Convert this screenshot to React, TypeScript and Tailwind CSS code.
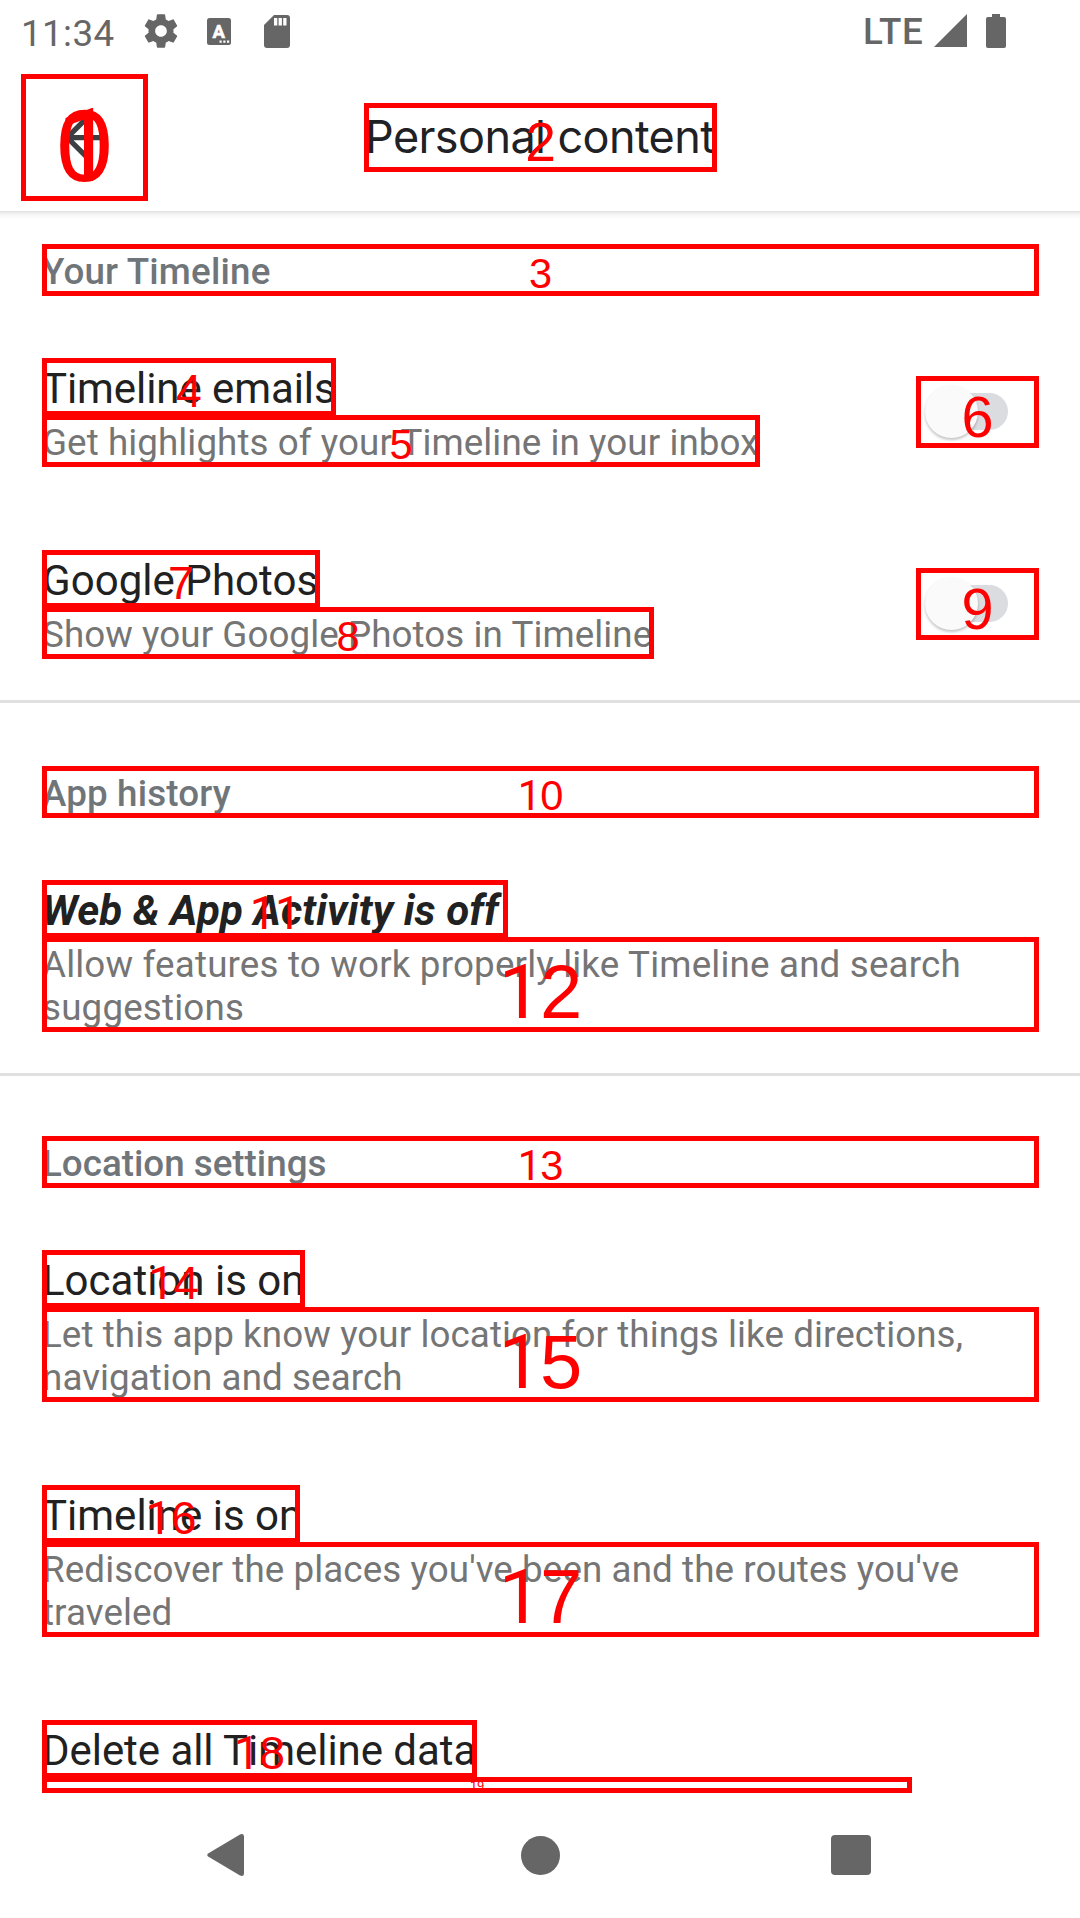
import type { ReactNode } from "react";
import { MdArrowBack } from "react-icons/md";

function Mark({ n, size }: { n: number; size: string }) {
  return (
    <div
      className={`absolute inset-0 z-10 flex items-center justify-center border-[5px] border-[#ff0000] font-normal not-italic leading-none tracking-normal text-[#ff0000] ${size}`}
    >
      <span className="flex translate-y-[0.09em] items-baseline">
        {String(n)
          .split("")
          .map((digit, i) => (
            <span
              key={i}
              className={
                digit === "1"
                  ? "-mr-[0.02em] font-['Roboto',sans-serif]"
                  : "font-['Liberation_Sans',sans-serif]"
              }
            >
              {digit}
            </span>
          ))}
      </span>
    </div>
  );
}

function Header({ n, spacing, children }: { n: number; spacing: string; children: ReactNode }) {
  return (
    <div className="relative h-[52px] w-[997px] pt-[6px] text-[36.75px] font-medium leading-[43px] text-[#70757a]">
      <h2 className={`whitespace-nowrap ${spacing}`}>{children}</h2>
      <Mark n={n} size="text-[41.6px]" />
    </div>
  );
}

function Title({ n, box, strong, children }: { n: number; box: string; strong?: boolean; children: ReactNode }) {
  return (
    <div className={`relative h-[58px] ${box}`}>
      <h3
        className={`whitespace-nowrap pt-[2px] text-[42px] leading-[58px] text-[#212121] ${strong ? "font-bold italic" : ""}`}
      >
        {children}
      </h3>
      <Mark n={n} size="text-[46.4px]" />
    </div>
  );
}

function Summary({ n, box, size, lines }: { n: number; box: string; size: string; lines: string[] }) {
  return (
    <div className={`relative -mt-px pt-[6px] text-[36.75px] leading-[43px] text-[#757575] ${box}`}>
      {lines.map((line) => (
        <p key={line} className="whitespace-nowrap">
          {line}
        </p>
      ))}
      <Mark n={n} size={size} />
    </div>
  );
}

function Toggle({ n }: { n: number }) {
  return (
    <div className="relative mt-[18px] h-[72px] w-[123px]">
      <div className="ml-[15px] h-full w-[77px] pt-[17px]">
        <div className="h-[37px] rounded-full bg-[#dadce0]" />
        <div className="-ml-[6px] -mt-[45px] h-[53px] w-[53px] rounded-full bg-[#fafafa] shadow-[0_2px_3px_rgba(0,0,0,0.24)]" />
      </div>
      <Mark n={n} size="pt-[2px] text-[57.6px]" />
    </div>
  );
}

function StatusBar() {
  return (
    <div className="flex h-[63px] items-start text-[36.75px] leading-[43px] text-[#666666]">
      <span className="ml-[21px] mt-[12px] w-[120px] tracking-[0.4px]">11:34</span>
      <svg className="mt-[11px]" width="40" height="40" viewBox="0 0 24 24" fill="#666">
        <path d="M19.430 12.980c.04-.32.07-.64.07-.98s-.03-.66-.07-.98l2.110-1.650c.19-.15.24-.42.12-.64l-2-3.460c-.12-.22-.39-.3-.61-.22l-2.490 1c-.52-.4-1.080-.73-1.690-.98l-.38-2.650C14.460 2.180 14.250 2 14 2h-4c-.25 0-.46.18-.49.42l-.38 2.650c-.61.25-1.170.59-1.690.98l-2.490-1c-.23-.09-.49 0-.61.22l-2 3.460c-.13.22-.07.49.12.64l2.110 1.650c-.04.32-.07.65-.07.98s.03.66.07.98l-2.110 1.650c-.19.15-.24.42-.12.64l2 3.460c.12.22.39.3.61.22l2.490-1c.52.4 1.080.73 1.690.98l.38 2.650c.03.24.24.42.49.42h4c.25 0 .46-.18.49-.42l.38-2.650c.61-.25 1.170-.59 1.690-.98l2.490 1c.23.09.49 0 .61-.22l2-3.460c.12-.22.07-.49-.12-.64l-2.110-1.650zM12 15.500c-1.930 0-3.500-1.570-3.500-3.500s1.570-3.500 3.500-3.500 3.500 1.570 3.500 3.500-1.570 3.500-3.500 3.500z" />
      </svg>
      <svg className="ml-[26px] mt-[18px]" width="24" height="27" viewBox="0 0 24 27">
        <rect width="24" height="27" rx="2.500" fill="#666" />
        <text
          x="11.8"
          y="20"
          textAnchor="middle"
          className="fill-white stroke-white stroke-[0.6px] font-['Roboto',sans-serif] text-[18.500px] font-bold"
        >
          A
        </text>
        <path d="M12.500 22.500h2.200v2.300h-2.200zM16.300 22.500h2.200v2.300h-2.200zM20 22.500h2.200v2.300H20z" fill="#fff" />
      </svg>
      <svg className="ml-[33px] mt-[15px]" width="26" height="33" viewBox="0 0 26 33">
        <path d="M10 0H23a3 3 0 0 1 3 3V30a3 3 0 0 1-3 3H3a3 3 0 0 1-3-3V10Z" fill="#666" />
        <path d="M10 3h3.300v7.500H10zM14.600 3h3.300v7.500h-3.300zM19.200 3h3.300v7.500h-3.300z" fill="#fff" />
      </svg>
      <span className="ml-[573px] mt-[10px] w-[71px] font-medium tracking-[0.6px]">LTE</span>
      <svg className="mt-[14px]" width="33" height="33" viewBox="0 0 33 33">
        <path d="M0 33 33 0V33Z" fill="#666" />
      </svg>
      <svg className="ml-[19px] mt-[14px]" width="20" height="34" viewBox="0 0 20 34">
        <path d="M6 0h8v3h4a2 2 0 0 1 2 2v27a2 2 0 0 1-2 2H2a2 2 0 0 1-2-2V5a2 2 0 0 1 2-2h4Z" fill="#666" />
      </svg>
    </div>
  );
}

function AppBar() {
  return (
    <div className="flex h-[148px] items-start">
      <div className="relative ml-[21px] mt-[11px] flex h-[127px] w-[127px] items-center justify-center">
        <MdArrowBack className="h-[63px] w-[63px] text-[#3c4043]" />
        <Mark n={0} size="text-[101.6px]" />
        <Mark n={1} size="text-[101.6px]" />
      </div>
      <div className="relative ml-[216px] mt-[40px] h-[69px] w-[353px]">
        <h1 className="-mt-px ml-px whitespace-nowrap font-['Inter',sans-serif] text-[45px] leading-[69px] tracking-[-0.6px] text-[#202124]">
          Personal content
        </h1>
        <Mark n={2} size="text-[55.2px]" />
      </div>
    </div>
  );
}

function NavBar() {
  return (
    <div className="flex h-[126px] items-center">
      <svg className="ml-[207px]" width="37" height="42" viewBox="0 0 37 42">
        <path d="M1.500 19.200 33 .5Q37-1 37 3V39Q37 43 33 41.500L1.500 22.800Q-1 21 1.500 19.200Z" fill="#666" />
      </svg>
      <div className="ml-[277px] h-[39px] w-[39px] rounded-full bg-[#666666]" />
      <div className="ml-[271px] h-[40px] w-[40px] rounded-[4px] bg-[#666666]" />
    </div>
  );
}

export default function App() {
  return (
    <div className="flex h-[1918px] w-[1080px] flex-col overflow-hidden bg-white font-['Roboto',sans-serif]">
      <StatusBar />
      <AppBar />
      <div className="h-[8px] bg-gradient-to-b from-[#e0e0e0] via-[#f4f4f4] via-40% to-white" />
      <main className="h-[1573px]">
        <section className="flex h-[481px] flex-col pl-[42px] pt-[25px]">
          <Header n={3} spacing="tracking-[0.18px]">Your Timeline</Header>
          <div className="mt-[62px] flex w-[997px] justify-between">
            <div>
              <Title n={4} box="w-[294px] tracking-[-0.08px]">Timeline emails</Title>
              <Summary
                n={5}
                box="h-[52px] w-[718px] tracking-[0.08px]"
                size="text-[41.6px]"
                lines={["Get highlights of your Timeline in your inbox"]}
              />
            </div>
            <Toggle n={6} />
          </div>
          <div className="mt-[83px] flex w-[997px] justify-between">
            <div>
              <Title n={7} box="w-[278px] tracking-[0.05px]">Google Photos</Title>
              <Summary
                n={8}
                box="h-[52px] w-[612px] tracking-[0.07px]"
                size="text-[41.6px]"
                lines={["Show your Google Photos in Timeline"]}
              />
            </div>
            <Toggle n={9} />
          </div>
        </section>
        <section className="h-[373px] border-t-[3px] border-[#e0e0e0] pl-[42px] pt-[63px]">
          <Header n={10} spacing="tracking-[0.15px]">App history</Header>
          <div className="mt-[62px]">
            <Title n={11} box="w-[466px] tracking-[0.12px]" strong>Web &amp; App Activity is off</Title>
            <Summary
              n={12}
              box="h-[95px] w-[997px] tracking-[0.175px]"
              size="text-[76px]"
              lines={["Allow features to work properly like Timeline and search", "suggestions"]}
            />
          </div>
        </section>
        <section className="border-t-[3px] border-[#e0e0e0] pl-[42px] pt-[60px]">
          <Header n={13} spacing="tracking-normal">Location settings</Header>
          <div className="mt-[62px]">
            <Title n={14} box="w-[263px]">Location is on</Title>
            <Summary
              n={15}
              box="h-[95px] w-[997px] tracking-[0.08px]"
              size="text-[76px]"
              lines={["Let this app know your location for things like directions,", "navigation and search"]}
            />
          </div>
          <div className="mt-[83px]">
            <Title n={16} box="w-[258px]">Timeline is on</Title>
            <Summary
              n={17}
              box="h-[95px] w-[997px] tracking-[0.09px]"
              size="text-[76px]"
              lines={["Rediscover the places you've been and the routes you've", "traveled"]}
            />
          </div>
          <div className="mt-[83px]">
            <Title n={18} box="w-[435px] tracking-[-0.05px]">Delete all Timeline data</Title>
            <Summary n={19} box="h-[16px] w-[870px]" size="text-[12.8px]" lines={[]} />
          </div>
        </section>
      </main>
      <NavBar />
    </div>
  );
}
